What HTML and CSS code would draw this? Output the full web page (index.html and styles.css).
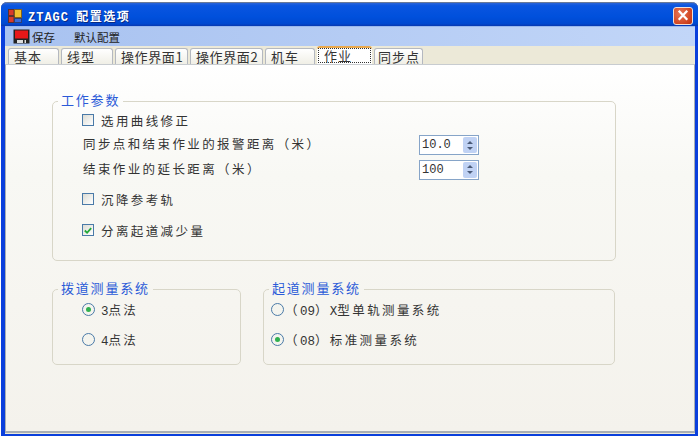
FILE: index.html
```html
<!DOCTYPE html>
<html lang="zh">
<head>
<meta charset="utf-8">
<title>ZTAGC 配置选项</title>
<link rel="stylesheet" href="styles.css">
</head>
<body>
<div class="window">
  <header class="titlebar">
    <svg class="app-icon" width="14" height="14" viewBox="0 0 14 14">
      <rect width="14" height="14" fill="#d8dce8"/>
      <rect x="0.5" y="0.5" width="5.5" height="6" fill="#d83a2a" stroke="#5a3030"/>
      <rect x="6.5" y="0.5" width="7" height="8" fill="#f0c030" stroke="#806020"/>
      <rect x="0.5" y="7.5" width="5.5" height="6" fill="#d83a2a" stroke="#5a3030"/>
      <rect x="6.5" y="9.5" width="7" height="4" fill="#3a6ad8" stroke="#304070"/>
    </svg>
    <span class="title"><span class="title-latin">ZTAGC</span> 配置选项</span>
    <button class="close" aria-label="关闭">
      <svg width="19" height="17" viewBox="0 0 19 17"><path d="M5 3.5 14 13M14 3.5 5 13" stroke="#fff" stroke-width="2.4" fill="none"/></svg>
    </button>
  </header>
  <nav class="menubar">
    <svg class="save-icon" width="17" height="15" viewBox="0 0 17 15">
      <rect x="0.5" y="0.5" width="16" height="14" fill="#222"/>
      <rect x="2" y="1.5" width="13" height="8" fill="#e81818"/>
      <rect x="4" y="11" width="9" height="3" fill="#ddd"/>
      <rect x="10" y="11" width="1.5" height="3" fill="#222"/>
    </svg>
    <span class="menu-item save">保存</span>
    <span class="menu-item">默认配置</span>
  </nav>
  <div class="tabs">
    <span class="tab w50">基本</span>
    <span class="tab w52">线型</span>
    <span class="tab w72">操作界面1</span>
    <span class="tab w73">操作界面2</span>
    <span class="tab w51">机车</span>
    <span class="tab active"><span class="focus">作业</span></span>
    <span class="tab w49">同步点</span>
  </div>
  <main class="page">
    <fieldset class="group params">
      <legend>工作参数</legend>
      <label class="row r1"><span class="check"></span>选用曲线修正</label>
      <div class="row r2 field"><span class="field-label">同步点和结束作业的报警距离（米）</span>
        <span class="spin"><span class="value">10.0</span><span class="spin-btn"><i class="up"></i><i class="down"></i></span></span></div>
      <div class="row r3 field"><span class="field-label">结束作业的延长距离（米）</span>
        <span class="spin"><span class="value">100</span><span class="spin-btn"><i class="up"></i><i class="down"></i></span></span></div>
      <label class="row r4"><span class="check"></span>沉降参考轨</label>
      <label class="row r5"><span class="check"><svg width="11" height="11" viewBox="0 0 11 11"><path d="M2 5.5 4.5 8 9 3" stroke="#22a838" stroke-width="2" fill="none"/></svg></span>分离起道减少量</label>
    </fieldset>
    <div class="lower">
      <fieldset class="group lining">
        <legend>拨道测量系统</legend>
        <label class="row opt1"><span class="radio on"></span><span><span class="latin">3</span>点法</span></label>
        <label class="row opt2"><span class="radio"></span><span><span class="latin">4</span>点法</span></label>
      </fieldset>
      <fieldset class="group lifting">
        <legend>起道测量系统</legend>
        <label class="row opt1"><span class="radio"></span><span>（<span class="latin">09</span>）<span class="latin">X</span>型单轨测量系统</span></label>
        <label class="row opt2"><span class="radio on"></span><span>（<span class="latin">08</span>）标准测量系统</span></label>
      </fieldset>
    </div>
  </main>
</div>
</body>
</html>
```

FILE: styles.css
```css
* { box-sizing: border-box; }
html, body { margin: 0; padding: 0; background: #fff; }
body { font-family: "Noto Sans CJK SC", "Liberation Sans", sans-serif; font-size: 12px; color: #333; width: 699px; height: 437px; overflow: hidden; }

.window { margin: 2px 1px 0 1px; width: 697px; height: 434px; display: flex; flex-direction: column; border: solid #0a3fdc; border-width: 0 3px 2px 4px; border-radius: 6px 6px 0 0; background: #ece9d8; }

.titlebar { flex: 0 0 24px; margin: 0 -3px 0 -4px; display: flex; align-items: center; padding: 2px 5px 0 7px; background: linear-gradient(#2a64d8 0, #0a55e0 12%, #0050dc 60%, #0048d0 90%, #0838b0 100%); border-top: 1px solid #6a7a98; border-radius: 6px 6px 0 0; }
.app-icon { margin-right: 6px; }
.title { color: #fff; font-weight: 700; font-size: 12px; letter-spacing: 1.5px; text-shadow: 1px 1px 0 #0a2a80; white-space: pre; flex: 1; font-family: "Noto Sans CJK SC", sans-serif; }
.title-latin { font-family: "Liberation Mono", monospace; letter-spacing: 1px; margin-right: 3px; }
.close { width: 20px; height: 18px; padding: 0; border: 1px solid #f0e0d8; border-radius: 3px; background: radial-gradient(circle at 35% 35%, #e87858, #d04420 70%, #b83010); display: flex; align-items: center; justify-content: center; margin-right: 0; }

.menubar { flex: 0 0 20px; margin-top: 0; display: flex; align-items: center; padding-left: 8px; background: linear-gradient(90deg, #a8c2f0, #c2d6f8); border-top: 1px solid #9ab8ec; }
.save-icon { margin-right: 2px; }
.menu-item { font-size: 11.5px; color: #222; }
.menu-item.save { margin-right: 19px; }

.tabs { flex: 0 0 18px; display: flex; align-items: flex-end; padding-left: 3px; gap: 2px; }
.tab { height: 16px; line-height: 15px; background: linear-gradient(#fff, #f0efe6); border: 1px solid #b4b8c0; border-bottom: 0; border-radius: 3px 3px 0 0; font-size: 13px; letter-spacing: 1px; padding-left: 5px; white-space: nowrap; }
.w50 { width: 51px; }
.w52 { width: 52px; }
.w72 { width: 73px; letter-spacing: 0.6px; }
.w73 { width: 73px; letter-spacing: 0.6px; }
.w51 { width: 50px; }
.w49 { width: 49px; padding-left: 3px; letter-spacing: 1px; font-size: 13px; }
.tab.active { width: 55px; height: 18px; background: #fff; border: 0; border-top: 2px solid #eaa84c; padding: 0 1px; margin: 0 0 0 0; }
.focus { display: block; height: 15px; border: 1px dotted #333; border-top: 1px dotted #333; padding-left: 5px; line-height: 13px; }

.page { flex: 1; background: linear-gradient(#fff 0, #f8f8f4 30%, #f4f2ec 100%); border: 1px solid #a8aeb4; border-top: 1px solid #c8ccd0; border-bottom: 2px solid #a8aeb4; padding: 28px 78px 0 46px; margin: 0 0 1px 0; display: flex; flex-direction: column; }

.group { margin: 0; border: 1px solid #d8d6c8; border-radius: 5px; padding: 0; min-width: 0; }
.group legend { margin-left: 5px; padding: 0 3px; color: #2a5ad8; font-size: 13px; letter-spacing: 1.8px; line-height: 14px; height: 16px; }
.params { height: 168px; padding-top: 1px; }

.row { display: flex; align-items: center; height: 20px; font-size: 12.5px; letter-spacing: 2.4px; color: #333; white-space: nowrap; }
.params .row { padding-left: 29px; }
.r1 { margin-top: 0; }
.params .r2 { margin-top: 3px; padding-left: 30px; }
.params .r3 { margin-top: 5px; padding-left: 30px; }
.params .r4 { margin-top: 11px; }
.params .r5 { margin-top: 11px; }
.field-label { width: 336px; flex: none; }

.check { width: 12px; height: 12px; flex: none; margin-right: 7px; border: 1px solid #4a7aa8; background: linear-gradient(135deg, #dcdcd4, #fff); display: flex; align-items: center; justify-content: center; }

.spin { width: 60px; height: 20px; flex: none; display: flex; align-items: center; border: 1px solid #86a4c8; background: #fff; padding: 1px; }
.r2 .spin { margin-top: 4px; }
.r3 .spin { margin-top: 3px; }
.value { flex: 1; font-family: "Liberation Mono", monospace; font-size: 12px; letter-spacing: 0; padding-left: 1px; }
.spin-btn { width: 14px; height: 16px; background: #c0d2f4; border-radius: 2px; display: flex; flex-direction: column; align-items: center; justify-content: center; gap: 3px; }
.spin-btn i { display: block; width: 0; height: 0; border-left: 3px solid transparent; border-right: 3px solid transparent; }
.up { border-bottom: 3px solid #4a5a78; }
.down { border-top: 3px solid #4a5a78; }

.lower { display: flex; margin-top: 20px; gap: 22px; }
.lower .group { height: 84px; padding-top: 2px; }
.lining { width: 189px; }
.lifting { width: 352px; }
.lining .row { padding-left: 29px; letter-spacing: 2.3px; }
.lifting .row { padding-left: 7px; letter-spacing: 2.4px; }
.lifting .radio { margin-right: 1px; }
.opt2 { margin-top: 10px; }
.latin { font-family: "Liberation Mono", monospace; letter-spacing: 0; }

.radio { width: 13px; height: 13px; flex: none; margin-right: 6px; border: 1px solid #4a7aa8; border-radius: 50%; background: #f4f4ee; display: flex; align-items: center; justify-content: center; }
.radio.on::after { content: ""; width: 5px; height: 5px; border-radius: 50%; background: #30b050; }
```
